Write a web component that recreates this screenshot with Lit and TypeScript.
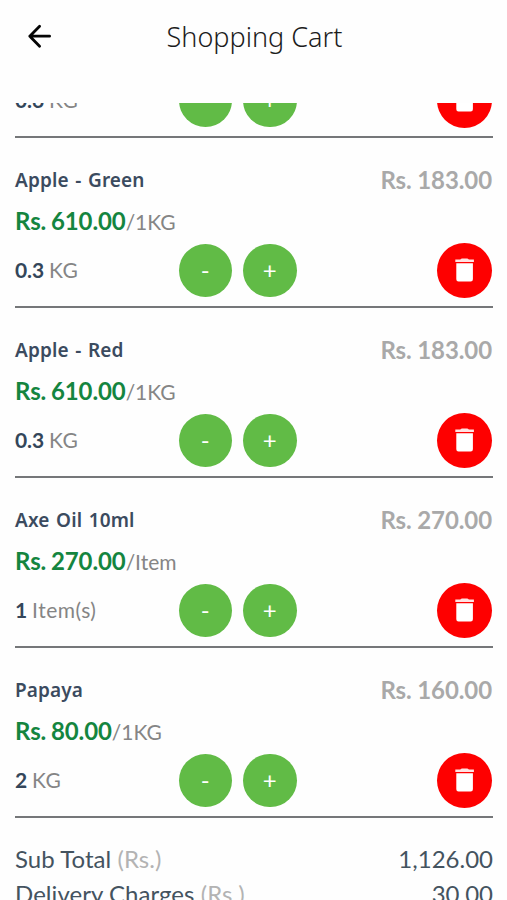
import { LitElement, html, css, nothing } from "lit";
import { customElement, property } from "lit/decorators.js";

interface CartItem {
  name?: string;
  total?: string;
  price?: string;
  per?: string;
  qty: string;
  unit: string;
}

const ITEMS: CartItem[] = [
  { qty: "0.6", unit: "KG" },
  { name: "Apple - Green", total: "Rs. 183.00", price: "Rs. 610.00", per: "/1KG", qty: "0.3", unit: "KG" },
  { name: "Apple - Red", total: "Rs. 183.00", price: "Rs. 610.00", per: "/1KG", qty: "0.3", unit: "KG" },
  { name: "Axe Oil 10ml", total: "Rs. 270.00", price: "Rs. 270.00", per: "/Item", qty: "1", unit: "Item(s)" },
  { name: "Papaya", total: "Rs. 160.00", price: "Rs. 80.00", per: "/1KG", qty: "2", unit: "KG" },
];

@customElement("cart-item")
export class CartItemRow extends LitElement {
  @property({ attribute: false }) item!: CartItem;

  static styles = css`
    :host {
      display: flex;
      flex-direction: column;
      justify-content: flex-end;
      box-sizing: border-box;
      border-bottom: 2px solid #757779;
      font-family: Lato, sans-serif;
    }
    .head {
      display: flex;
      justify-content: space-between;
      height: 42px;
      line-height: 42px;
    }
    .name {
      font: 600 19px/42px "Noto Sans", sans-serif;
      letter-spacing: 0.12px;
      word-spacing: 1.5px;
      color: #3b4b5f;
    }
    .total {
      margin-right: 1px;
      font-size: 24px;
      font-weight: 700;
      letter-spacing: -0.1px;
      color: #a9a9a9;
    }
    .price {
      height: 42px;
      line-height: 40px;
      font-size: 21px;
      color: #858585;
      white-space: nowrap;
    }
    .amount {
      font-size: 24px;
      font-weight: 700;
      letter-spacing: -0.1px;
      word-spacing: -1px;
      color: #14853f;
    }
    .controls {
      display: grid;
      grid-template-columns: 163.5px 53.5px 53.5px 1fr;
      align-items: center;
      height: 55px;
      margin-bottom: 8px;
    }
    .qty {
      display: flex;
      gap: 5px;
      padding-bottom: 2px;
      font-size: 21px;
      line-height: 52px;
      letter-spacing: 0.5px;
      color: #858585;
      white-space: nowrap;
    }
    .count {
      font-weight: 700;
      letter-spacing: -0.1px;
      color: #34465a;
    }
    .round {
      box-sizing: border-box;
      display: flex;
      align-items: center;
      justify-content: center;
      width: 53.5px;
      height: 53.5px;
      padding: 0 0 1px;
      border: 0;
      border-radius: 50%;
      background: #61bb46;
      color: #fff;
      font: 400 24px/1 Lato, sans-serif;
    }
    .plus {
      margin-left: 11px;
    }
    .remove {
      justify-self: end;
      width: 55px;
      height: 55px;
      margin-right: 1px;
      background: #fe0000;
    }
    .bin {
      display: block;
      width: 20px;
      height: 24px;
    }
  `;

  render() {
    const i = this.item;
    return html`
      ${i.name
        ? html`<div class="head"><span class="name">${i.name}</span><span class="total">${i.total}</span></div>
            <div class="price"><span class="amount">${i.price}</span>${i.per}</div>`
        : nothing}
      <div class="controls">
        <div class="qty"><span class="count">${i.qty}</span><span>${i.unit}</span></div>
        <button class="round">-</button>
        <button class="round plus">+</button>
        <button class="round remove" aria-label="Remove">
          <svg class="bin" viewBox="0 0 20 24">
            <path d="M5.2 1.6 6.8.4h5.6L14 1.6h4.9v2.5H.3V1.6z" fill="#ffe2e2" />
            <path d="M1.3 5.2h16.6v16a2.2 2.2 0 0 1-2.2 2.2H3.5a2.2 2.2 0 0 1-2.2-2.2z" fill="#fff" />
          </svg>
        </button>
      </div>
    `;
  }
}

@customElement("app-root")
export class AppRoot extends LitElement {
  static styles = css`
    :host {
      display: flex;
      flex-direction: column;
      height: 900px;
      overflow: hidden;
      background: #fefefe;
      font-family: Lato, sans-serif;
    }
    .bar {
      display: grid;
      grid-template-columns: 81px 1fr 79px;
      align-items: center;
      flex: none;
      height: 73px;
      margin-bottom: 30px;
    }
    .back {
      display: block;
      width: 26px;
      height: 26px;
      margin: -2px 0 0 27px;
    }
    .title {
      margin: 0;
      text-align: center;
      font: 300 27px/40px "Noto Sans", sans-serif;
      color: #1c1c1c;
    }
    .scroll {
      flex: 1;
      min-height: 0;
      overflow: hidden;
      padding: 0 14px 0 15px;
    }
    .list {
      margin-top: -135px;
    }
    .entry {
      height: 170px;
    }
    .sum {
      display: flex;
      justify-content: space-between;
      height: 35px;
      line-height: 35px;
      font-size: 24px;
      color: #44535f;
    }
    .sums {
      padding-top: 23px;
    }
    .label {
      letter-spacing: 0.05px;
    }
    .cur {
      color: #b3b3b3;
    }
  `;

  render() {
    return html`
      <header class="bar">
        <svg class="back" viewBox="0 0 26 26" fill="none" stroke="#050505" stroke-width="2.8" stroke-linecap="round" stroke-linejoin="round">
          <path d="M22.6 13.2H2.8M12.6 3.2 2.8 13.2l9.8 10" />
        </svg>
        <h1 class="title">Shopping Cart</h1>
      </header>
      <main class="scroll">
        <div class="list">
          ${ITEMS.map((item) => html`<cart-item class="entry" .item=${item}></cart-item>`)}
        </div>
        <div class="sums">
          <div class="sum"><span class="label">Sub Total <span class="cur">(Rs.)</span></span><span>1,126.00</span></div>
          <div class="sum"><span class="label">Delivery Charges <span class="cur">(Rs.)</span></span><span>30.00</span></div>
        </div>
      </main>
    `;
  }
}
